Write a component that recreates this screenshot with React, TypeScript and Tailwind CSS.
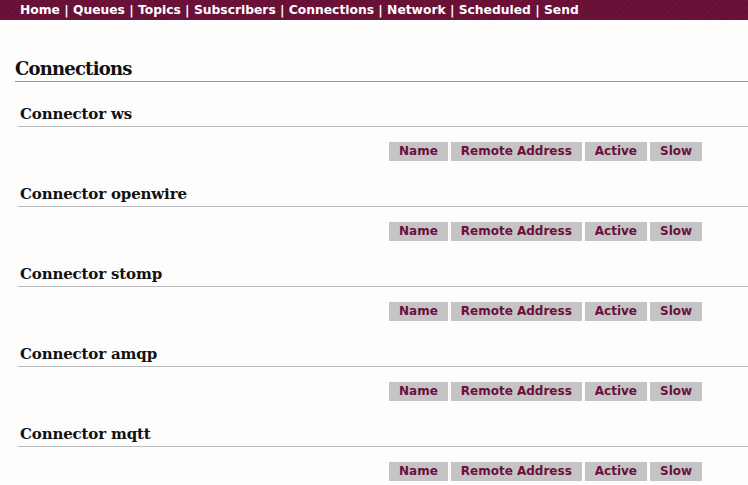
import React from 'react';

const navItems = ['Home', 'Queues', 'Topics', 'Subscribers', 'Connections', 'Network', 'Scheduled', 'Send'];
const connectors = ['ws', 'openwire', 'stomp', 'amqp', 'mqtt'];
const columns = ['Name', 'Remote Address', 'Active', 'Slow'];

const Connector: React.FC<{ name: string }> = ({ name }) => (
  <div className="pl-[18px]">
    <h3 className="text-[15px] font-bold text-[#111] leading-[19px] pl-[2px] pt-[1px] pb-[2px] tracking-[-0.15px] border-b border-[#bbbbbb] font-['Georgia','DejaVu_Serif',serif]">
      Connector {name}
    </h3>
    <div className="pl-[371px] pt-[15px] pb-[23px]">
      <table className="border-separate border-spacing-x-[3px] border-spacing-y-0 -ml-[3px]">
        <thead>
          <tr>
            {columns.map((c) => (
              <th
                key={c}
                className="bg-[#c4c4c4] text-[#6c0f3c] text-[12px] font-bold h-[19px] leading-[19px] px-[10px] font-['Verdana','DejaVu_Sans',sans-serif]"
              >
                {c}
              </th>
            ))}
          </tr>
        </thead>
      </table>
    </div>
  </div>
);

export default function App() {
  return (
    <div className="min-h-[485px] bg-[#fdfdfd]">
      <div className="h-[20px] bg-[#6b1038] bg-[repeating-linear-gradient(135deg,#6f1239_0px,#6f1239_2px,#651035_2px,#651035_4px)] pl-[20px] text-white text-[12.3px] font-bold leading-[20px] font-['Verdana','DejaVu_Sans',sans-serif]">
        {navItems.map((n, i) => (
          <span key={n}>
            {i > 0 && ' | '}
            {n}
          </span>
        ))}
      </div>
      <div className="pt-[37px] pl-[15px]">
        <h2 className="text-[18px] font-bold text-[#111] leading-[24px] tracking-[-0.8px] border-b border-[#999999] font-['Georgia','DejaVu_Serif',serif]">
          Connections
        </h2>
        <div className="pt-[22px] -ml-[15px]">
          {connectors.map((c) => (
            <Connector key={c} name={c} />
          ))}
        </div>
      </div>
    </div>
  );
}
